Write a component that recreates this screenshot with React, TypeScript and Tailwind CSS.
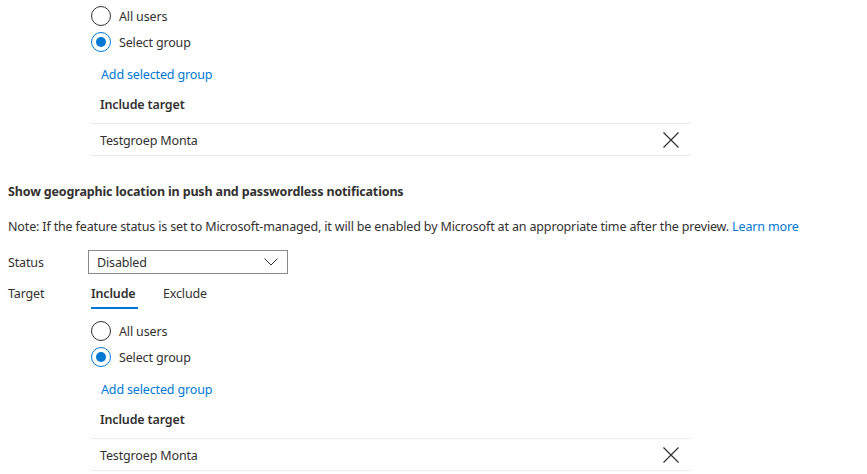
import React from "react";

const Radio = ({ checked, label }: { checked?: boolean; label: string }) => (
  <div className="flex h-[26px] items-center">
    <div
      className={
        checked
          ? "flex h-[20px] w-[20px] items-center justify-center rounded-full border border-[#0078d4]"
          : "h-[20px] w-[20px] rounded-full border border-[#323130]"
      }
    >
      {checked && <div className="h-[10px] w-[10px] rounded-full bg-[#0078d4]" />}
    </div>
    <span className="ml-[8px] pt-[2px] leading-[20px]">{label}</span>
  </div>
);

const XIcon = () => (
  <svg width="16" height="16" viewBox="0 0 16 16" fill="none">
    <path d="M0.5 0.5 L15.5 15.5 M15.5 0.5 L0.5 15.5" stroke="#323130" strokeWidth="1.2" />
  </svg>
);

const TargetBlock = () => (
  <div className="pl-[91px]">
    <Radio label="All users" />
    <Radio checked label="Select group" />
    <div className="mt-[9px] h-[20px] pl-[10px] pt-[1px] leading-[20px] text-[#0078d4]">Add selected group</div>
    <div className="pl-[9px] pt-[11px] pb-[8px] font-semibold leading-[20px]">Include target</div>
    <div className="flex h-[33px] w-[600px] items-center justify-between border-y border-[#edebe9] pl-[9px] pr-[12px]">
      <span className="pt-[2px] leading-[20px]">Testgroep Monta</span>
      <XIcon />
    </div>
  </div>
);

export default function App() {
  return (
    <div
      className="h-[474px] w-[867px] overflow-hidden bg-white text-[12.5px] tracking-[-0.15px] text-[#323130]"
      style={{ fontFamily: '"Noto Sans", "Open Sans", sans-serif' }}
    >
      <div className="pt-[3px]">
        <TargetBlock />
      </div>
      <div className="mt-[26px] pl-[8px] font-bold leading-[20px]">
        Show geographic location in push and passwordless notifications
      </div>
      <div className="mt-[15px] pl-[8px] leading-[20px]">
        Note: If the feature status is set to Microsoft-managed, it will be enabled by Microsoft at an appropriate time
        after the preview. <span className="text-[#0078d4]">Learn more</span>
      </div>
      <div className="mt-[13px] flex h-[24px] items-center pl-[8px]">
        <span className="w-[80px] pt-[2px] leading-[20px]">Status</span>
        <div className="flex h-[24px] w-[200px] items-center justify-between border border-[#8a8886] pl-[8px] pr-[9px]">
          <span className="pt-[1px] leading-[20px]">Disabled</span>
          <svg width="14" height="8" viewBox="0 0 14 8" fill="none">
            <path d="M0.5 0.5 L7 7 L13.5 0.5" stroke="#323130" strokeWidth="1" />
          </svg>
        </div>
      </div>
      <div className="mt-[10px] flex pl-[8px]">
        <span className="w-[83px] leading-[20px]">Target</span>
        <div className="flex gap-[25px]">
          <div className="flex w-[47px] flex-col">
            <span className="font-semibold leading-[20px]">Include</span>
            <div className="mt-[3px] h-[2px] bg-[#0078d4]" />
          </div>
          <span className="leading-[20px]">Exclude</span>
        </div>
      </div>
      <div className="pt-[9px]">
        <TargetBlock />
      </div>
    </div>
  );
}
